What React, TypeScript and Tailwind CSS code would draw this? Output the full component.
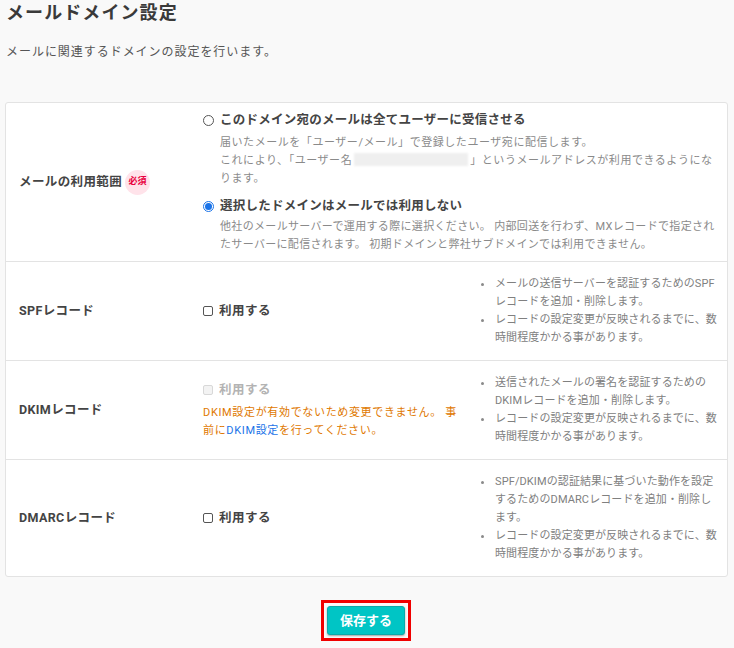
import React from 'react'

const FONT = "font-['Roboto','Noto_Sans_CJK_JP',sans-serif]"

const Radio = ({ checked }: { checked?: boolean }) => (
  <span
    className={`mt-[5px] flex h-[11px] w-[11px] shrink-0 items-center justify-center rounded-full border ${
      checked ? 'border-[#1a73e8] bg-white' : 'border-[#555] bg-white'
    }`}
  >
    {checked && <span className="h-[7px] w-[7px] rounded-full bg-[#1a73e8]" />}
  </span>
)

const Check = ({ disabled }: { disabled?: boolean }) => (
  <span
    className={`h-[10px] w-[10px] shrink-0 rounded-[2px] border ${
      disabled ? 'border-[#d8d8d8] bg-[#f3f3f3]' : 'border-[#555] bg-white'
    }`}
  />
)

const UseCheck = ({ disabled }: { disabled?: boolean }) => (
  <label className={`flex items-center gap-[6px] text-[12.5px] font-bold leading-[20px] tracking-[0.04em] ${disabled ? 'text-[#b3b3b3]' : 'text-[#444]'}`}>
    <Check disabled={disabled} />
    <span>利用する</span>
  </label>
)

const Notes = ({ items }: { items: string[] }) => (
  <ul className="flex flex-col text-[11px] leading-[18px] tracking-[0.01em] text-[#808080]">
    {items.map((t) => (
      <li key={t} className="flex">
        <span className="flex h-[18px] w-[14px] shrink-0 items-center">
          <span className="h-[3px] w-[3px] rounded-full bg-[#8a8a8a]" />
        </span>
        <span>{t}</span>
      </li>
    ))}
  </ul>
)

const LAG = 'レコードの設定変更が反映されるまでに、数時間程度かかる事があります。'

type RecRow = { label: string; notes: string[]; dkim?: boolean }

const RECORDS: RecRow[] = [
  { label: 'SPFレコード', notes: ['メールの送信サーバーを認証するためのSPFレコードを追加・削除します。', LAG] },
  { label: 'DKIMレコード', notes: ['送信されたメールの署名を認証するためのDKIMレコードを追加・削除します。', LAG], dkim: true },
  { label: 'DMARCレコード', notes: ['SPF/DKIMの認証結果に基づいた動作を設定するためのDMARCレコードを追加・削除します。', LAG] },
]

export default function App() {
  return (
    <div className={`${FONT} min-h-[648px] w-[734px] bg-[#f9f9f9] px-[5px] text-[#333]`}>
      <h1 className="pl-px pt-[2px] text-[18px] font-bold leading-[22px] tracking-[0.06em] text-[#3a3a3a]">メールドメイン設定</h1>
      <p className="mt-[19px] pl-px text-[12px] leading-[18px] tracking-[0.08em] text-[#555]">メールに関連するドメインの設定を行います。</p>

      <div className="mt-[41px] w-[723px] rounded-[3px] border border-[#e3e3e3] bg-white">
        {/* usage scope */}
        <div className="flex">
          <div className="flex w-[197px] shrink-0 items-center gap-[3px] pl-[13px]">
            <span className="text-[12.5px] font-bold tracking-[0.03em] text-[#444]">メールの利用範囲</span>
            <span className="flex h-[25px] w-[25px] items-center justify-center rounded-full bg-[#ffe3ea] text-[9px] font-bold text-[#e8003d]">必須</span>
          </div>
          <div className="flex-1 pb-[7px] pr-[5px] pt-[7px]">
            <div className="flex gap-[6px]">
              <Radio />
              <div>
                <div className="text-[12.5px] font-bold leading-[20px] tracking-[0.02em] text-[#444]">このドメイン宛のメールは全てユーザーに受信させる</div>
                <p className="mt-[4px] text-[11px] leading-[18px] tracking-[0.05em] text-[#8a8a8a]">
                  届いたメールを「ユーザー/メール」で登録したユーザ宛に配信します。
                  <br />
                  これにより、「ユーザー名
                  <span className="mx-[2px] inline-block h-[13px] w-[114px] align-[-2px] bg-[#efefef] blur-[1px]" />
                  」というメールアドレスが利用できるようになります。
                </p>
              </div>
            </div>
            <div className="mt-[8px] flex gap-[6px]">
              <Radio checked />
              <div>
                <div className="text-[12.5px] font-bold leading-[20px] tracking-[0.02em] text-[#444]">選択したドメインはメールでは利用しない</div>
                <p className="mt-[2px] text-[11px] leading-[18px] tracking-[0.03em] text-[#8a8a8a]">
                  他社のメールサーバーで運用する際に選択ください。 内部回送を行わず、MXレコードで指定されたサーバーに配信されます。 初期ドメインと弊社サブドメインでは利用できません。
                </p>
              </div>
            </div>
          </div>
        </div>

        {RECORDS.map((r) => (
          <div key={r.label} className="flex border-t border-[#e3e3e3]">
            <div className="flex w-[197px] shrink-0 items-center pl-[13px] text-[12.5px] font-bold tracking-[0.03em] text-[#444]">
              {r.label}
            </div>
            <div className="flex w-[267px] shrink-0 flex-col justify-center pr-[6px]">
              <UseCheck disabled={r.dkim} />
              {r.dkim && (
                <p className="mt-[4px] text-[11px] leading-[18px] tracking-[0.06em] text-[#e07800]">
                  DKIM設定が有効でないため変更できません。 事前に<span className="text-[#1a73e8]">DKIM設定</span>を行ってください。
                </p>
              )}
            </div>
            <div className="flex-1 py-[13px] pl-[11px] pr-[7px]">
              <Notes items={r.notes} />
            </div>
          </div>
        ))}
      </div>

      <div className="mt-[23px] flex justify-center pr-[2px]">
        <div className="border-[3px] border-[#f00000] p-[3px]">
          <button className="h-[29px] w-[78px] rounded-[3px] border border-[#0aa9a9] bg-[#00c5c5] text-[13px] font-bold text-white shadow-[0_1px_2px_rgba(0,0,0,0.35)]">
            保存する
          </button>
        </div>
      </div>
    </div>
  )
}
